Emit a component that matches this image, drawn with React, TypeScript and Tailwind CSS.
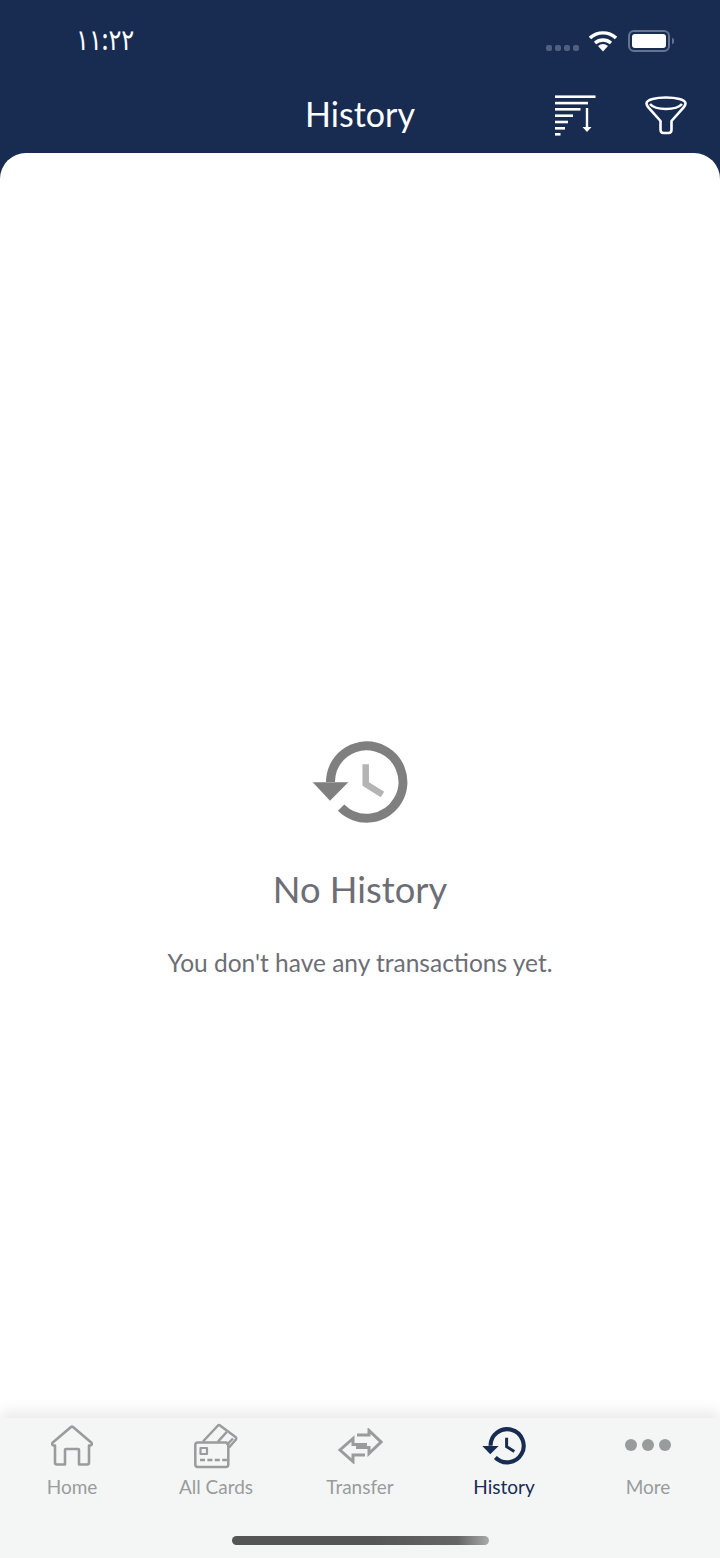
import React from "react";

function SortIcon() {
  return (
    <svg width="42" height="42" viewBox="0 0 42 42" className="block">
      <g fill="#fff">
        <rect x="1" y="1.4" width="40.5" height="2.6" />
        <rect x="1" y="7.8" width="33" height="2.6" />
        <rect x="1" y="14" width="25.5" height="2.6" />
        <rect x="1" y="20.4" width="18" height="2.6" />
        <rect x="1" y="26.7" width="13" height="2.6" />
        <rect x="1" y="33" width="10" height="2.6" />
        <rect x="1" y="39" width="5.5" height="2.6" />
        <rect x="31.8" y="14" width="2.4" height="21" />
        <path d="M28.5 33 h9 l-4.5 5 z" />
      </g>
    </svg>
  );
}

function FunnelIcon() {
  return (
    <svg width="42" height="40" viewBox="0 0 42 40" fill="none" stroke="#fff" strokeWidth="2.6" strokeLinejoin="round" className="block">
      <path d="M1.5 7.5 C1.5 3.5 11 1.5 21 1.5 C31 1.5 40.5 3.5 40.5 7.5 C40.5 9.5 39.5 10.5 38 12.2 L26.5 25 V33.5 Q26.5 37 23.5 37 H18.5 Q15.5 37 15.5 33.5 V25 L4 12.2 C2.5 10.5 1.5 9.5 1.5 7.5 Z" />
      <path d="M5 8 C8 11.5 14 13 21 13 C28 13 34 11.5 37 8" />
    </svg>
  );
}

function HistoryGlyph({ size, ring, hand }: { size: number; ring: string; hand: string }) {
  return (
    <svg width={size} height={(size * 84) / 96} viewBox="0 0 96 84" className="block">
      <path d="M18.5 41 A36.2 36.2 0 1 1 29.1 66.6" fill="none" stroke={ring} strokeWidth="9" />
      <path d="M0.7 41.3 H36.3 L18 59.7 Z" fill={ring} />
      <path d="M53.7 23.3 V43 L70.5 53.5" fill="none" stroke={hand} strokeWidth="6.5" />
    </svg>
  );
}

function HomeIcon() {
  return (
    <svg width="44" height="44" viewBox="0 0 44 44" fill="none" stroke="#999c9c" strokeWidth="2.6" strokeLinejoin="round" strokeLinecap="round" className="block">
      <path d="M5 21.5 H3.5 Q1.5 21 2.5 18.8 L21 3 Q22 2.2 23 3 L41.5 18.8 Q42.5 21 40.5 21.5 H39 V38.5 Q39 40.5 37 40.5 H29 V26 Q29 25 28 25 H16 Q15 25 15 26 V40.5 H7 Q5 40.5 5 38.5 Z" />
    </svg>
  );
}

function CardsIcon() {
  return (
    <svg width="46" height="46" viewBox="0 0 46 46" fill="none" stroke="#999c9c" strokeWidth="2.5" strokeLinejoin="round" className="block">
      <rect x="2.3" y="19.5" width="33" height="24.5" rx="2.5" />
      <path d="M10 18.5 L25 2.5 Q26 1.5 27 2.5 L42.5 14 Q44 15.5 42.5 17 L36 24.5" />
      <path d="M33.7 9 L25 18.7 M40 15.5 L33.7 22" />
      <rect x="7.5" y="25" width="6.5" height="6" strokeWidth="2.2" />
      <path d="M7 37 H34" strokeDasharray="5 2.4" />
    </svg>
  );
}

function TransferIcon() {
  return (
    <svg width="46" height="36" viewBox="0 0 46 36" fill="none" stroke="#999c9c" strokeWidth="3" strokeLinejoin="miter" className="block">
      <path d="M20 7 H32 V2.5 L44 14 L32 25.5 V19.5 H19" />
      <path d="M30 16.5 H16 V10.5 L3 22 L16 33.5 V27 H28" />
    </svg>
  );
}

function Tab({ label, icon, active = false }: { label: string; icon: React.ReactNode; active?: boolean }) {
  return (
    <div className="flex flex-col items-center">
      <div className="h-[50px] flex items-center justify-center">{icon}</div>
      <span className={`mt-[4px] text-[19px] leading-[24px] ${active ? "text-[#182c52]" : "text-[#999c9c]"}`}>{label}</span>
    </div>
  );
}

export default function App() {
  return (
    <div className="w-[720px] h-[1558px] flex flex-col bg-[#182c52] overflow-hidden font-['Lato','Noto_Sans',sans-serif]">
      <header className="h-[153px] shrink-0 relative">
        <div className="flex items-start justify-between h-[81px] pl-[76px] pr-[46px]">
          <span className="inline-block origin-left scale-x-[0.83] mt-[21px] text-white text-[29px] leading-[36px] font-['Noto_Sans','DejaVu_Sans',sans-serif] font-medium">۱۱:۲۲</span>
          <div className="flex items-center mt-[30px]">
            <div className="flex gap-[3px] mr-[10px] mt-[14px]">
              <span className="w-[6px] h-[6px] rounded-[2px] bg-[#4f607f]" />
              <span className="w-[6px] h-[6px] rounded-[2px] bg-[#4f607f]" />
              <span className="w-[6px] h-[6px] rounded-[2px] bg-[#4f607f]" />
              <span className="w-[6px] h-[6px] rounded-[2px] bg-[#4f607f]" />
            </div>
            <svg width="28" height="22" viewBox="0 0 28 22" className="block mr-[11px]">
              <path d="M1 8 A19 19 0 0 1 27 8" fill="none" stroke="#fff" strokeWidth="3.4" />
              <path d="M6 13 A12 12 0 0 1 22 13" fill="none" stroke="#fff" strokeWidth="3.4" />
              <path d="M9 16 A8 8 0 0 1 19 16 L14 21.5 Z" fill="#fff" />
            </svg>
            <div className="flex items-center">
              <div className="w-[42px] h-[22px] rounded-[6px] border-2 border-[#66758f] p-[2px]">
                <div className="w-full h-full rounded-[3px] bg-white" />
              </div>
              <span className="ml-[2px] w-[2px] h-[6px] rounded-r-[2px] bg-[#66758f]" />
            </div>
          </div>
        </div>
        <div className="flex items-center justify-center h-[66px]">
          <h1 className="text-white text-[34px] leading-[40px]">History</h1>
        </div>
        <div className="absolute left-[554px] top-[94px]"><SortIcon /></div>
        <div className="absolute left-[645px] top-[96px]"><FunnelIcon /></div>
      </header>

      <main className="flex-1 min-h-0 bg-white rounded-t-[26px] flex flex-col items-center pt-[588px]">
        <HistoryGlyph size={96} ring="#7f7f7f" hand="#b4b4b4" />
        <h2 className="mt-[42px] text-[36.3px] leading-[44px] text-[#6d6e75]">No History</h2>
        <p className="mt-[36px] text-[24.5px] leading-[32px] text-[#6d6e75]">You don't have any transactions yet.</p>
      </main>

      <nav className="h-[140px] shrink-0 bg-[#f4f6f6] shadow-[0_-6px_14px_rgba(0,0,0,0.09)] relative">
        <div className="grid grid-cols-5 pt-[3px]">
          <Tab label="Home" icon={<HomeIcon />} />
          <Tab label="All Cards" icon={<CardsIcon />} />
          <Tab label="Transfer" icon={<TransferIcon />} />
          <Tab label="History" active icon={<HistoryGlyph size={44} ring="#182c52" hand="#182c52" />} />
          <Tab
            label="More"
            icon={
              <div className="flex gap-[5px] mb-[2px]">
                <span className="w-[12px] h-[12px] rounded-full bg-[#999c9c]" />
                <span className="w-[12px] h-[12px] rounded-full bg-[#999c9c]" />
                <span className="w-[12px] h-[12px] rounded-full bg-[#999c9c]" />
              </div>
            }
          />
        </div>
        <div className="mt-[37px] mx-auto w-[257px] h-[9px] rounded-full bg-[linear-gradient(90deg,#555_0%,#555_55%,#666_88%,#aaa_100%)]" />
      </nav>
    </div>
  );
}
